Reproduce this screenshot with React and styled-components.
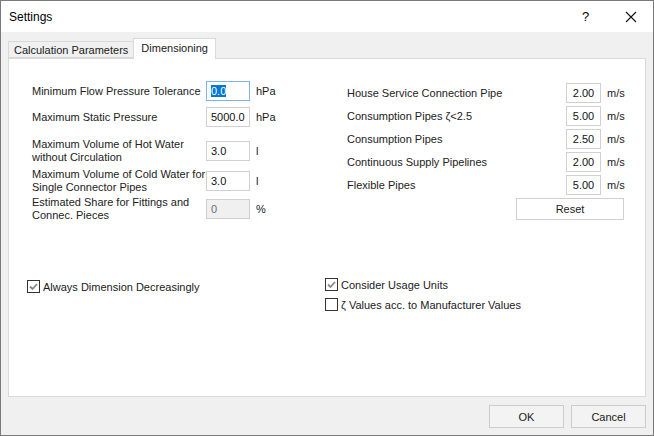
import React from 'react';
import styled, { createGlobalStyle } from 'styled-components';

const Global = createGlobalStyle`
  html, body { margin: 0; padding: 0; }
  body { font-family: "Liberation Sans", Arial, sans-serif; font-size: 11px; color: #1a1a1a; }
`;

const Window = styled.div`
  width: 654px;
  height: 436px;
  box-sizing: border-box;
  border: 1px solid #7a7a7a;
  background: #f0f0f0;
  display: flex;
  flex-direction: column;
`;

const TitleBar = styled.div`
  height: 31px;
  background: #fff;
  display: flex;
  align-items: center;
  padding-left: 8px;
  font-size: 12px;
  color: #000;
`;

const Title = styled.div`
  flex: 1;
`;

const TitleButton = styled.div`
  width: 45px;
  display: flex;
  justify-content: center;
  align-items: center;
  font-size: 13px;
`;

const Body = styled.div`
  flex: 1;
  display: flex;
  flex-direction: column;
  padding: 6px 7px 7px 7px;
`;

const Tabs = styled.div`
  display: flex;
  align-items: flex-end;
  height: 20px;
  position: relative;
  z-index: 1;
`;

const Tab = styled.div`
  height: ${p => (p.$active ? '21px' : '17px')};
  margin-bottom: ${p => (p.$active ? '-1px' : '0')};
  box-sizing: border-box;
  padding: ${p => (p.$active ? '3px 7px 0' : '2px 5px 0')};
  border: 1px solid #d9d9d9;
  border-bottom: ${p => (p.$active ? 'none' : '1px solid #d9d9d9')};
  background: ${p => (p.$active ? '#fff' : '#f0f0f0')};
  margin-left: ${p => (p.$active ? '-1px' : '0')};
`;

const Panel = styled.div`
  height: 339px;
  box-sizing: border-box;
  background: #fff;
  border: 1px solid #d9d9d9;
  padding: 22px 0 0 18px;
`;

const Top = styled.div`
  display: grid;
  grid-template-columns: 320px 1fr;
`;

const Column = styled.div`
  display: flex;
  flex-direction: column;
  padding-left: ${p => p.$pl || 0}px;
  padding-top: ${p => p.$pt || 0}px;
`;

const Row = styled.div`
  display: grid;
  grid-template-columns: ${p => p.$cols};
  align-items: center;
  margin-top: ${p => p.$mt || 0}px;
  min-height: 20px;
`;

const Label = styled.div`
  line-height: 13px;
  color: #222;
  white-space: nowrap;
`;

const Input = styled.div`
  height: 20px;
  box-sizing: border-box;
  border: 1px solid ${p => (p.$focus ? '#7eb4ea' : '#d0d0d0')};
  background: ${p => (p.$disabled ? '#f0f0f0' : '#fff')};
  color: ${p => (p.$disabled ? '#6d6d6d' : '#111')};
  padding: 0 4px;
  display: flex;
  align-items: center;
  justify-content: ${p => (p.$center ? 'center' : 'flex-start')};
  font-size: 11px;
`;

const Selected = styled.span`
  background: #0078d7;
  color: #fff;
`;

const Unit = styled.div`
  padding-left: 6px;
`;

const ResetButton = styled.div`
  margin: 3px 0 0 169px;
  width: 108px;
  height: 22px;
  box-sizing: border-box;
  border: 1px solid #d0d0d0;
  display: flex;
  align-items: center;
  justify-content: center;
`;

const Bottom = styled.div`
  display: grid;
  grid-template-columns: 298px 1fr;
  margin-top: 56px;
`;

const CheckRow = styled.div`
  display: flex;
  align-items: center;
  gap: 3px;
  margin-top: ${p => p.$mt || 0}px;
`;

const Box = styled.div`
  width: 13px;
  height: 13px;
  box-sizing: border-box;
  border: 1px solid #333;
  background: #fff;
  display: flex;
  align-items: center;
  justify-content: center;
`;

const Footer = styled.div`
  display: flex;
  justify-content: flex-end;
  gap: 7px;
  padding-top: 8px;
`;

const Button = styled.div`
  width: 75px;
  height: 23px;
  box-sizing: border-box;
  border: 1px solid #cccccc;
  background: #f3f3f3;
  display: flex;
  align-items: center;
  justify-content: center;
`;

const Check = ({ checked, children, mt }) => (
  <CheckRow $mt={mt}>
    <Box>
      {checked && (
        <svg width="9" height="9" viewBox="0 0 9 9">
          <path d="M1 4.5 L3.5 7 L8 2" fill="none" stroke="#888" strokeWidth="1.8" />
        </svg>
      )}
    </Box>
    {children}
  </CheckRow>
);

const leftCols = '174px 44px auto';
const rightCols = '219px 35px auto';

const rightRows = [
  ['House Service Connection Pipe', '2.00'],
  ['Consumption Pipes ζ<2.5', '5.00'],
  ['Consumption Pipes', '2.50'],
  ['Continuous Supply Pipelines', '2.00'],
  ['Flexible Pipes', '5.00'],
];

export default function App() {
  return (
    <>
      <Global />
      <Window>
        <TitleBar>
          <Title>Settings</Title>
          <TitleButton>?</TitleButton>
          <TitleButton>
            <svg width="12" height="12" viewBox="0 0 12 12">
              <path d="M1 1 L11 11 M11 1 L1 11" stroke="#111" strokeWidth="1.1" />
            </svg>
          </TitleButton>
        </TitleBar>
        <Body>
          <Tabs>
            <Tab>Calculation Parameters</Tab>
            <Tab $active>Dimensioning</Tab>
          </Tabs>
          <Panel>
            <Top>
              <Column $pl={5}>
                <Row $cols={leftCols}>
                  <Label>Minimum Flow Pressure Tolerance</Label>
                  <Input $focus><Selected>0.0</Selected></Input>
                  <Unit>hPa</Unit>
                </Row>
                <Row $cols={leftCols} $mt={6}>
                  <Label>Maximum Static Pressure</Label>
                  <Input>5000.0</Input>
                  <Unit>hPa</Unit>
                </Row>
                <Row $cols={leftCols} $mt={11}>
                  <Label>Maximum Volume of Hot Water<br />without Circulation</Label>
                  <Input>3.0</Input>
                  <Unit>l</Unit>
                </Row>
                <Row $cols={leftCols} $mt={4}>
                  <Label>Maximum Volume of Cold Water for<br />Single Connector Pipes</Label>
                  <Input>3.0</Input>
                  <Unit>l</Unit>
                </Row>
                <Row $cols={leftCols} $mt={2}>
                  <Label>Estimated Share for Fittings and<br />Connec. Pieces</Label>
                  <Input $disabled>0</Input>
                  <Unit>%</Unit>
                </Row>
              </Column>
              <Column $pt={2}>
                {rightRows.map(([l, v], i) => (
                  <Row key={l} $cols={rightCols} $mt={i ? 3 : 0}>
                    <Label>{l}</Label>
                    <Input $center>{v}</Input>
                    <Unit>m/s</Unit>
                  </Row>
                ))}
                <ResetButton>Reset</ResetButton>
              </Column>
            </Top>
            <Bottom>
              <Column $pt={2}>
                <Check checked>Always Dimension Decreasingly</Check>
              </Column>
              <Column>
                <Check checked>Consider Usage Units</Check>
                <Check mt={7}>ζ Values acc. to Manufacturer Values</Check>
              </Column>
            </Bottom>
          </Panel>
          <Footer>
            <Button>OK</Button>
            <Button>Cancel</Button>
          </Footer>
        </Body>
      </Window>
    </>
  );
}
